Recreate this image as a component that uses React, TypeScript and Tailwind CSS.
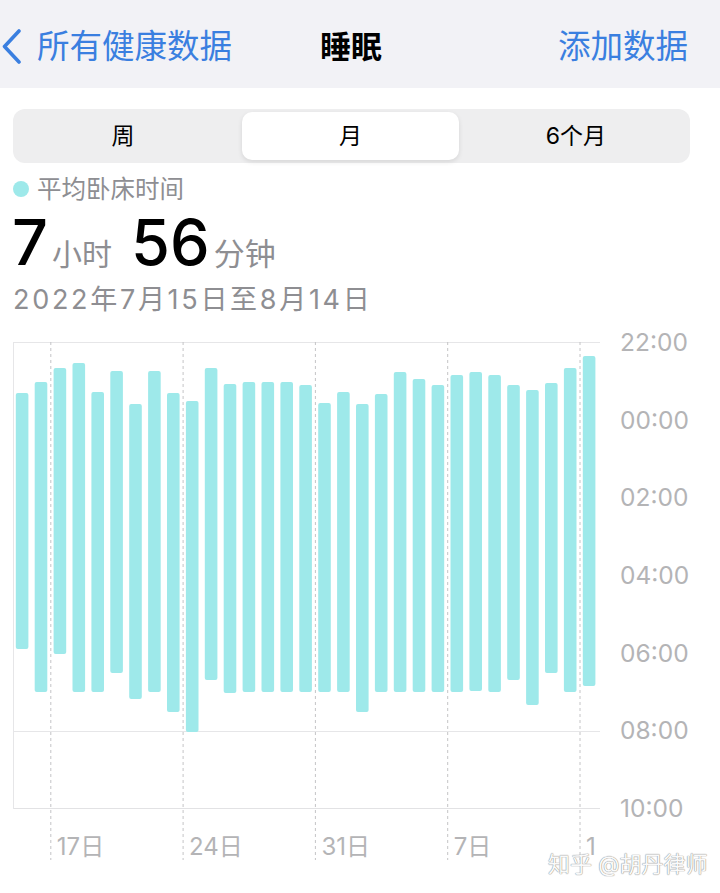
import React from "react";

const FONT = "font-['Inter','Noto_Sans_CJK_SC',sans-serif]";

const bars: [number, number][] = [
  [393, 649], [382, 692], [368, 654], [363, 692], [392, 692], [371, 673], [404, 699],
  [371, 692], [393, 712], [401, 732], [368, 680], [384, 693], [382, 692], [382, 692],
  [382, 692], [385, 692], [403, 692], [392, 692], [404, 712], [394, 692], [372, 692],
  [379, 692], [385, 692], [375, 692], [372, 691], [375, 692], [385, 680], [390, 705],
  [383, 673], [368, 692], [356, 686],
];

const OY = 330;
const SLOT = 18.9;
const X0 = 13;

const yLabels = ["22:00", "00:00", "02:00", "04:00", "06:00", "08:00", "10:00"];
const xTicks = [
  { k: 2, label: "17日" },
  { k: 9, label: "24日" },
  { k: 16, label: "31日" },
  { k: 23, label: "7日" },
  { k: 30, label: "14日" },
];

function Chart() {
  return (
    <svg width={600} height={540} className="block">
      <defs>
        <clipPath id="clipx">
          <rect x={0} y={0} width={596} height={540} />
        </clipPath>
      </defs>
      <line x1={X0} y1={12.5} x2={600} y2={12.5} stroke="#e6e6e8" strokeWidth={1} />
      <line x1={X0} y1={401.5} x2={600} y2={401.5} stroke="#e6e6e8" strokeWidth={1} />
      <line x1={X0} y1={478.5} x2={600} y2={478.5} stroke="#e2e2e4" strokeWidth={1.2} />
      <line x1={X0 + 0.5} y1={12} x2={X0 + 0.5} y2={479} stroke="#e6e6e8" strokeWidth={1} />
      {xTicks.map((t) => {
        const x = X0 + SLOT * t.k;
        return (
          <line
            key={t.k}
            x1={x}
            y1={12}
            x2={x}
            y2={530}
            stroke="#c4c4c6"
            strokeWidth={1}
            strokeDasharray="3 3"
          />
        );
      })}
      {bars.map(([t, b], i) => (
        <rect
          key={i}
          x={X0 + SLOT * i + 2.8}
          y={t - OY}
          width={12.6}
          height={b - t}
          rx={2}
          fill="#9ee9ea"
        />
      ))}
      <g clipPath="url(#clipx)">
        {xTicks.map((t) => (
          <text
            key={t.k}
            x={X0 + SLOT * t.k + 6}
            y={525}
            fontSize={24}
            fill="#b4b4b6"
            fontFamily="Inter, 'Noto Sans CJK SC', sans-serif"
          >
            {t.label}
          </text>
        ))}
      </g>
    </svg>
  );
}

export default function App() {
  return (
    <div className={`relative w-[720px] h-[893px] overflow-hidden bg-white ${FONT}`}>
      {/* Header */}
      <div className="h-[88px] bg-[#f2f2f6] flex items-center pt-[5px]">
        <div className="flex items-center">
          <svg width={22} height={36} viewBox="0 0 22 36" className="ml-[1px]">
            <polyline
              points="18,2 3.5,17.5 18,33"
              fill="none"
              stroke="#3a7fe0"
              strokeWidth={3.6}
              strokeLinecap="round"
              strokeLinejoin="round"
            />
          </svg>
          <span className="ml-[14px] text-[32.5px] leading-[40px] text-[#3a7fe0]">所有健康数据</span>
        </div>
        <span className="ml-[88px] text-[31px] leading-[40px] font-bold text-black">睡眠</span>
        <span className="ml-auto mr-[32px] text-[32.5px] leading-[40px] text-[#3a7fe0]">添加数据</span>
      </div>

      {/* Segmented control */}
      <div className="mx-[13px] mt-[21px] w-[677px] h-[54px] rounded-[12px] bg-[#eeeeef] flex items-center px-[3px]">
        <div className="w-[226px] h-[48px] flex items-center justify-center text-[23px] text-black">
          <span className="mr-[12px]">周</span>
        </div>
        <div className="w-[217px] h-[48px] rounded-[10px] bg-white shadow-[0_2px_5px_rgba(0,0,0,0.10)] flex items-center justify-center text-[23px] text-black">
          月
        </div>
        <div className="flex-1 h-[48px] flex items-center justify-center text-[23px] text-black">
          <span className="ml-[6px]">6个月</span>
        </div>
      </div>

      {/* Legend */}
      <div className="mt-[12px] ml-[13px] flex items-center h-[28px]">
        <div className="w-[16px] h-[16px] rounded-full bg-[#9ee9ea]" />
        <span className="ml-[8px] text-[24.5px] leading-[28px] text-[#8e8e92]">平均卧床时间</span>
      </div>

      {/* Big value */}
      <div className="mt-[8px] ml-[12px] flex items-baseline h-[62px]">
        <span className="text-[63px] leading-[62px] font-medium text-black">7</span>
        <span className="ml-[4px] text-[30px] text-[#8e8e92]">小时</span>
        <span className="ml-[19px] text-[63px] leading-[62px] font-medium text-black">56</span>
        <span className="ml-[4px] text-[31px] text-[#8e8e92]">分钟</span>
      </div>

      {/* Date range */}
      <div className="mt-[10px] ml-[13px] text-[27px] leading-[34px] tracking-[2.7px] text-[#8e8e92]">
        2022年7月15日至8月14日
      </div>

      {/* Chart */}
      <div className="mt-[13px] flex">
        <Chart />
        <div className="ml-[20px] flex flex-col">
          {yLabels.map((l) => (
            <div key={l} className="h-[77.67px] text-[24.5px] leading-[24px] text-[#b4b4b6]">
              {l}
            </div>
          ))}
        </div>
      </div>

      {/* Watermark */}
      <div className="absolute left-[548px] top-[850px] text-[22px] leading-[28px] text-[#fafafa] [text-shadow:0_0_1px_#8a8a8a,0_0_1px_#8a8a8a]">
        知乎 @胡丹律师
      </div>
    </div>
  );
}
